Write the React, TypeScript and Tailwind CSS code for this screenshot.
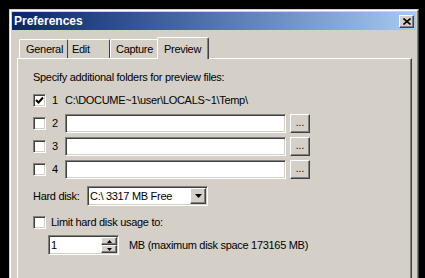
import React from "react";

const raised =
  "border border-t-white border-l-white border-r-[#404040] border-b-[#404040] shadow-[inset_-1px_-1px_0_#808080] bg-[#d4d0c8]";
const sunken =
  "border border-t-[#808080] border-l-[#808080] border-r-white border-b-white shadow-[inset_1px_1px_0_#404040,inset_-1px_-1px_0_#d4d0c8] bg-white";

function CheckBox({ checked = false }: { checked?: boolean }) {
  return (
    <div className={`${sunken} flex h-[13px] w-[13px] shrink-0 items-center justify-center`}>
      {checked && (
        <svg width="9" height="9" viewBox="0 0 9 9">
          <path d="M1 4 L3.5 6.5 L8 1.5" stroke="#000" strokeWidth="2" fill="none" />
        </svg>
      )}
    </div>
  );
}

function FolderRow({ n }: { n: number }) {
  return (
    <div className="flex h-[19px] items-center">
      <CheckBox />
      <span className="ml-[6px] w-[13px]">{n}</span>
      <div className={`${sunken} h-[19px] w-[221px]`} />
      <div className={`${raised} ml-[4px] flex h-[19px] w-[20px] items-center justify-center pb-[3px] text-[10px] tracking-normal`}>
        ...
      </div>
    </div>
  );
}

export default function App() {
  return (
    <div className="h-[278px] w-[425px] overflow-hidden bg-black pl-[9px] pt-[9px] font-['Liberation_Sans',Arial,sans-serif]">
      <div className="h-[300px] w-[410px] border border-t-[#d4d0c8] border-l-[#d4d0c8] border-r-[#404040] border-b-[#404040] bg-[#d4d0c8]">
        <div className="h-full border border-t-white border-l-white border-r-[#808080] border-b-[#808080] p-px">
          {/* title bar */}
          <div className="flex h-[18px] items-center justify-between bg-linear-to-r from-[#0a246a] to-[#a6caf0] pl-[2px] pr-[2px]">
            <span className="text-[12px] font-bold leading-none text-white">Preferences</span>
            <div className={`${raised} flex h-[13px] w-[15px] items-center justify-center`}>
              <svg width="8" height="7" viewBox="0 0 8 7">
                <path d="M0.5 0.5 L7.5 6.5 M7.5 0.5 L0.5 6.5" stroke="#000" strokeWidth="1.6" />
              </svg>
            </div>
          </div>

          <div className="pl-[5px] pr-[4px] pt-[7px] text-[11px] tracking-[-0.3px] text-black">
            {/* tabs */}
            <div className="flex h-[21px] items-end pl-[2px]">
              <div className="flex h-[19px] w-[49px] items-center rounded-t-[2px] border-l border-r border-t border-l-white border-r-[#404040] border-t-white pl-[6px]">
                General
              </div>
              <div className="flex h-[19px] w-[42px] items-center rounded-tr-[2px] border-r border-t border-r-[#404040] border-t-white pl-[4px]">
                Edit
              </div>
              <div className="flex h-[19px] w-[49px] items-center rounded-tl-[2px] border-l border-t border-l-white border-t-white pl-[5px]">
                Capture
              </div>
              <div className="relative z-10 -mb-px -ml-[2px] flex h-[22px] w-[52px] items-start rounded-t-[2px] border-l border-r border-t border-l-white border-r-[#404040] border-t-white bg-[#d4d0c8] pl-[6px] pt-[3px] shadow-[inset_-1px_0_0_#808080]">
                Preview
              </div>
            </div>

            {/* panel */}
            <div className="h-[240px] border border-t-white border-l-white border-r-[#404040] border-b-[#404040] pl-[15px] pt-[11px] shadow-[inset_-1px_0_0_#808080]">
              <div className="h-[14px] leading-[14px]">Specify additional folders for preview files:</div>

              <div className="mt-[7px] flex flex-col gap-[4px]">
                <div className="flex h-[19px] items-center">
                  <CheckBox checked />
                  <span className="ml-[6px] w-[13px]">1</span>
                  <span>C:\DOCUME~1\user\LOCALS~1\Temp\</span>
                </div>
                <FolderRow n={2} />
                <FolderRow n={3} />
                <FolderRow n={4} />
              </div>

              <div className="mt-[7px] flex h-[20px] items-center">
                <span className="w-[54px]">Hard disk:</span>
                <div className={`${sunken} flex h-[20px] w-[121px] items-center justify-between pl-[2px] pr-px`}>
                  <span>C:\ 3317 MB Free</span>
                  <div className={`${raised} flex h-[16px] w-[16px] items-center justify-center`}>
                    <svg width="7" height="4" viewBox="0 0 7 4">
                      <path d="M0 0 H7 L3.5 4 Z" fill="#000" />
                    </svg>
                  </div>
                </div>
              </div>

              <div className="mt-[7px] flex h-[18px] items-center">
                <CheckBox />
                <span className="ml-[5px]">Limit hard disk usage to:</span>
              </div>

              <div className="mt-[4px] flex h-[20px] items-center">
                <div className={`${sunken} ml-[15px] flex h-[20px] w-[71px] items-center justify-between pl-[2px] pr-px`}>
                  <span>1</span>
                  <div className="flex h-[16px] w-[16px] flex-col">
                    <div className={`${raised} flex h-[8px] items-center justify-center`}>
                      <svg width="5" height="3" viewBox="0 0 5 3">
                        <path d="M0 3 H5 L2.5 0 Z" fill="#000" />
                      </svg>
                    </div>
                    <div className={`${raised} flex h-[8px] items-center justify-center`}>
                      <svg width="5" height="3" viewBox="0 0 5 3">
                        <path d="M0 0 H5 L2.5 3 Z" fill="#000" />
                      </svg>
                    </div>
                  </div>
                </div>
                <span className="ml-[10px]">MB (maximum disk space 173165 MB)</span>
              </div>
            </div>
          </div>
        </div>
      </div>
    </div>
  );
}
